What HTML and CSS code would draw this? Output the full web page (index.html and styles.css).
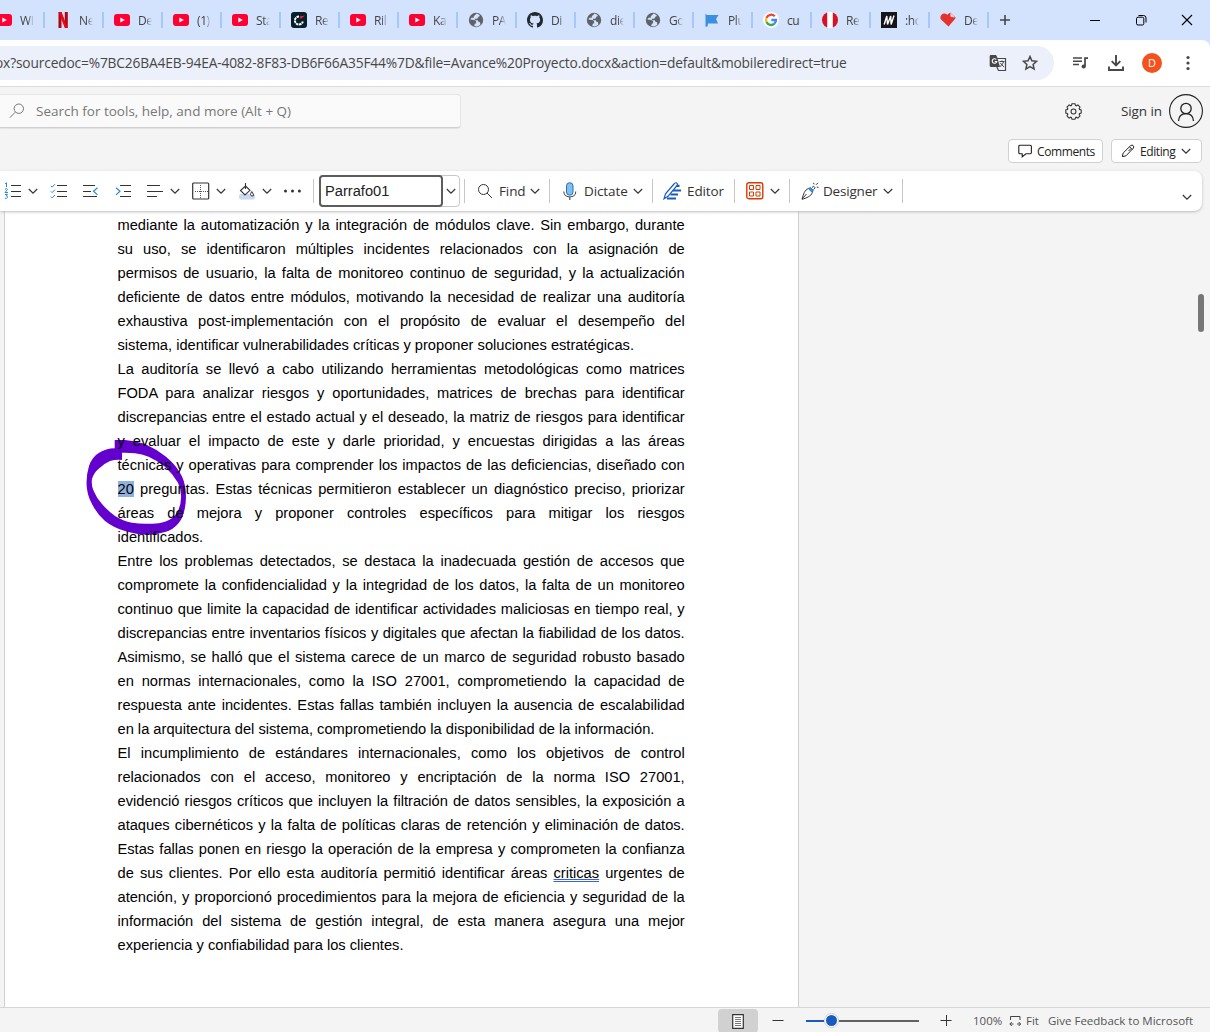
FILE: index.html
```html
<!DOCTYPE html>
<html lang="es">
<head>
<meta charset="utf-8">
<title>Avance Proyecto.docx</title>
<link rel="stylesheet" href="styles.css">
</head>
<body>
<svg class="defs" width="0" height="0">
  <symbol id="yt" viewBox="0 0 16 16"><rect x="0" y="2" width="16" height="12" rx="3" fill="#ff0033"/><path d="M6.3 5.4v5.2L10.8 8z" fill="#fff"/></symbol>
  <symbol id="globe" viewBox="0 0 16 16"><circle cx="8" cy="8" r="7.2" fill="#5f6368"/><path d="M8.7 1.6 5.8 4.2v1.6H3.5l-1.2 1.6 4 .5 1.8 1.3v2.3H6.9l-.7 2.6c3 .8 5-.1 6.200-1.500l-.4-2.300-1.500-.5-.8-1.600H6.900V6.800h2.300l1.500-2.200 1.400-.5C11.300 2.900 10.400 2 8.700 1.600z" fill="#d3e2fd"/></symbol>
  <symbol id="chev" viewBox="0 0 10 10"><path d="M.8 3 5 7.200 9.200 3" fill="none" stroke="#333" stroke-width="1.15"/></symbol>
  <symbol id="tooth" viewBox="-8 -8 16 16"><path d="M5.170-2.140 7.260-1.410V1.410L5.170 2.140" fill="none" stroke="#333"/></symbol>
</svg>

<header class="tabs">
  <div class="tab"><svg><use href="#yt"/></svg><span>WI</span></div>
  <div class="tab"><svg viewBox="0 0 16 16"><path d="M3.500 0h3v16l-3 .2zM9.800 0h3v16l-3-.3z" fill="#b1060f"/><path d="M3.500 0h3.100l6.200 16-3.100-.3z" fill="#e50914"/></svg><span>Ne</span></div>
  <div class="tab"><svg><use href="#yt"/></svg><span>De</span></div>
  <div class="tab"><svg><use href="#yt"/></svg><span>(1)</span></div>
  <div class="tab"><svg><use href="#yt"/></svg><span>Sta</span></div>
  <div class="tab"><svg viewBox="0 0 16 16"><rect width="16" height="16" rx="3" fill="#06202b"/><path d="M8 4.500a4 4 0 1 0 3.800 5" fill="none" stroke="#fff" stroke-width="2" stroke-dasharray="2.500 .6"/><path d="M8.500 4.500 14 3.500 9.800 7z" fill="#ff1744"/></svg><span>Re</span></div>
  <div class="tab"><svg><use href="#yt"/></svg><span>Ril</span></div>
  <div class="tab"><svg><use href="#yt"/></svg><span>Ka</span></div>
  <div class="tab"><svg><use href="#globe"/></svg><span>PA</span></div>
  <div class="tab"><svg viewBox="0 0 16 16"><path fill="#24292f" d="M8 0C3.580 0 0 3.580 0 8c0 3.540 2.290 6.530 5.470 7.590.4.070.55-.17.55-.38 0-.19-.01-.82-.01-1.490-2.010.37-2.530-.49-2.690-.94-.09-.23-.48-.94-.82-1.130-.28-.15-.68-.52-.01-.53.63-.01 1.080.58 1.230.82.72 1.210 1.870.87 2.330.66.07-.52.28-.87.51-1.070-1.780-.2-3.640-.89-3.640-3.950 0-.87.31-1.590.82-2.150-.08-.2-.36-1.020.08-2.120 0 0 .67-.21 2.200.82.64-.18 1.320-.27 2-.27s1.360.09 2 .27c1.530-1.040 2.200-.82 2.200-.82.44 1.100.16 1.920.08 2.120.51.56.82 1.270.82 2.150 0 3.070-1.870 3.750-3.650 3.950.29.25.54.73.54 1.480 0 1.070-.01 1.930-.01 2.200 0 .21.15.46.55.38A8.010 8.010 0 0 0 16 8c0-4.420-3.580-8-8-8z"/></svg><span>Di<!-- --></span></div>
  <div class="tab"><svg><use href="#globe"/></svg><span>die</span></div>
  <div class="tab"><svg><use href="#globe"/></svg><span>Go</span></div>
  <div class="tab"><svg viewBox="0 0 16 16"><path d="M1.500 1.800 3 3h11.500L12 7l2 4.500H4l-.5 3-2 .3z" fill="#3c8ee0"/></svg><span>Plu</span></div>
  <div class="tab"><svg viewBox="0 0 16 16"><circle cx="8" cy="8" r="8" fill="#fff"/><g fill="none" stroke-width="2.300"><path d="M11.800 4.300A5 5 0 0 0 3.500 5.900" stroke="#ea4335"/><path d="M3.500 5.900a5 5 0 0 0 0 4.200" stroke="#fbbc05"/><path d="M3.500 10.100a5 5 0 0 0 7.900 1.600" stroke="#34a853"/><path d="M11.400 11.700A5 5 0 0 0 13 8H8.300" stroke="#4285f4"/></g></svg><span class="plain">cu</span></div>
  <div class="tab"><svg viewBox="0 0 16 16"><circle cx="8" cy="8" r="8" fill="#d91023"/><path d="M5.200 0h5.600v16H5.200z" fill="#fff"/></svg><span>Re</span></div>
  <div class="tab"><svg viewBox="0 0 16 16"><path d="M0 0h16v16H0z" fill="#15141a"/><path d="M3.200 12.500 5.800 4l.7 8.500L9.700 4l.4 8.500L13 3.500" fill="none" stroke="#fff" stroke-width="1.400"/></svg><span>:ho</span></div>
  <div class="tab"><svg viewBox="0 0 16 16"><path d="M8.500 14.500.8 7.200C-1 3.500 3.500-.5 7.200 2.700L9.500 1l6 5.300z" fill="#e5322d"/><path d="m10 .8 5.500 4.700-5-.6z" fill="#fff" stroke="#e5322d" stroke-width=".5"/></svg><span>De</span></div>
  <svg class="plus" viewBox="0 0 12 12"><path d="M6 1v10M1 6h10" stroke="#474747" stroke-width="1.600"/></svg>
  <div class="winbtns">
    <svg viewBox="0 0 12 12"><path d="M1 6.500h10" stroke="#000"/></svg>
    <svg viewBox="0 0 12 12" fill="none" stroke="#000"><rect x="1.500" y="3.200" width="7.300" height="7.800" rx="1.500"/><path d="M3.500 1.500h5A2.500 2.500 0 0 1 11 4v4.500"/></svg>
    <svg viewBox="0 0 12 12"><path d="m1 1 10 10M11 1 1 11" stroke="#000" stroke-width="1.100"/></svg>
  </div>
</header>

<div class="addressbar">
  <div class="omnibox">
    <span class="url">ox?sourcedoc=%7BC26BA4EB-94EA-4082-8F83-DB6F66A35F44%7D&amp;file=Avance%20Proyecto.docx&amp;action=default&amp;mobileredirect=true</span>
    <svg class="translate" viewBox="0 0 18 18"><path d="M8 4.500h8.500v12H9.500L7.500 12" fill="none" stroke="#474747" stroke-width="1.200"/><path d="M1.500 1H7l1 1.800L11 13H1.500L.7 12V1.800z" fill="#474747"/><path d="M7.300 5.500a2.300 2.300 0 1 0 .5 2H5.700" fill="none" stroke="#fff" stroke-width="1.100"/><path d="M10.500 7.500h5M13 6.500v1M14.500 7.500c-.5 2.500-2 4-3.500 5M11.300 9l3.600 4" stroke="#474747" fill="none"/></svg>
    <svg class="star" viewBox="0 0 16 16"><path d="m8 1.500 1.900 4.300 4.700.5-3.500 3.100 1 4.700L8 11.700l-4.100 2.400 1-4.700L1.400 6.300l4.700-.5z" fill="none" stroke="#474747" stroke-width="1.500"/></svg>
  </div>
  <svg class="media" viewBox="0 0 16 14"><path d="M0 2h9M0 5.200h9M0 8.500h6" stroke="#474747" stroke-width="1.600"/><path d="M12 10V2.200h3" stroke="#474747" stroke-width="1.700" fill="none"/><circle cx="10.700" cy="10.500" r="2.100" fill="#474747"/></svg>
  <svg class="download" viewBox="0 0 16 16"><path d="M8 0v10M3.700 6.200 8 10.500l4.300-4.300M1 11.500V15h14v-3.500" fill="none" stroke="#474747" stroke-width="1.900"/></svg>
  <span class="profile">D</span>
  <svg class="kebab" viewBox="0 0 4 16" fill="#474747"><circle cx="2" cy="2.500" r="1.600"/><circle cx="2" cy="8" r="1.600"/><circle cx="2" cy="13.500" r="1.600"/></svg>
</div>

<div class="apphead">
  <div class="search">
    <svg viewBox="0 0 16 16" fill="none" stroke="#777"><circle cx="9.800" cy="5.700" r="4.700"/><path d="M6.300 9.200.8 14.700"/></svg>
    <span class="t-search">Search for tools, help, and more (Alt + Q)</span>
  </div>
  <svg class="gear" viewBox="-8 -8 16 16" fill="none" stroke="#333"><g id="half"><path id="t0" d="M5.170-2.140 7.260-1.410V1.410L5.170 2.140"/><use href="#t0" transform="rotate(45)"/><use href="#t0" transform="rotate(90)"/><use href="#t0" transform="rotate(135)"/></g><use href="#half" transform="rotate(180)"/><circle r="2.300"/></svg>
  <span class="signin">Sign in</span>
  <svg class="person" viewBox="0 0 34 34" fill="none" stroke="#222"><circle cx="17" cy="17" r="16.400" stroke-width="1.100"/><circle cx="17" cy="14.500" r="5.200" stroke-width="1.300"/><path d="M9.500 27c.3-4.700 3.200-7.300 7.500-7.300s7.200 2.600 7.500 7.300" stroke-width="1.300"/></svg>
</div>

<div class="modes">
  <div class="pill comments"><svg viewBox="0 0 14 14"><path d="M2 1.200h10.200q1.200 0 1.200 1.200v6.200q0 1.200-1.200 1.200H8L4.200 12.800V9.800H2Q.8 9.800.8 8.600V2.400Q.8 1.200 2 1.200z" fill="none" stroke="#222" stroke-width="1.100"/></svg><span>Comments</span></div>
  <div class="pill editing"><svg viewBox="0 0 14 14" fill="none" stroke="#222"><path d="m1.300 12.700.9-3.700L9.800 1.500q1.300-1 2.400.2t.2 2.400L5 11.800zM8.500 2.700l2.800 2.800M10 4.500 7.500 7"/></svg><span>Editing</span><svg class="chev"><use href="#chev"/></svg></div>
</div>

<div class="ribbon">
  <div class="cell"><svg class="ic" viewBox="0 0 18 18"><path d="M7 3.500h10M7 9.500h10M7 14.500h10" stroke="#333" stroke-width="1.100"/><path d="M1 1.800 2.500.8V5M1 7.200q2.500-1.200 2.500.3L1 10.500h3M1 12.500h2.500L2.300 14q1.700.2 1.200 1.600-.8 1.400-2.700.5" fill="none" stroke="#2b88d8"/></svg><svg class="chev"><use href="#chev"/></svg></div>
  <div class="cell"><svg class="ic" viewBox="0 0 18 18"><path d="M7 3.500h10M7 9.500h10M7 14.500h10" stroke="#333" stroke-width="1.100"/><path d="m.8 3.800 1.300 1.300L5 2.200M.8 9.300l1.300 1.300L5 7.700M.8 14.600l1.300 1.300L5 13" fill="none" stroke="#2b88d8"/></svg></div>
  <div class="cell"><svg class="ic" viewBox="0 0 18 18"><path d="M1 3.500h12M1 9.500h8M1 14.500h14" stroke="#333" stroke-width="1.100"/><path d="M15.500 5.700 11.500 9.300l4 3.600" fill="none" stroke="#2b88d8" stroke-width="1.200"/></svg></div>
  <div class="cell"><svg class="ic" viewBox="0 0 18 18"><path d="M5 3.500h11M9 9.500h7M5 14.500h11" stroke="#333" stroke-width="1.100"/><path d="M1 5.700 5 9.300l-4 3.600" fill="none" stroke="#2b88d8" stroke-width="1.200"/></svg></div>
  <div class="cell"><svg class="ic" viewBox="0 0 18 18"><path d="M1 3.500h13M1 9.500h16M1 14.500h10" stroke="#333" stroke-width="1.100"/></svg><svg class="chev"><use href="#chev"/></svg></div>
  <div class="cell"><svg class="ic" viewBox="0 0 18 18"><rect x=".7" y="1" width="16" height="16" rx="1" fill="none" stroke="#333" stroke-width="1.200"/><path d="M8.500 3v13M3 9.500h13" stroke="#555" stroke-dasharray="1 1"/></svg><svg class="chev"><use href="#chev"/></svg></div>
  <div class="cell"><svg class="ic" viewBox="0 0 18 18"><rect x="1" y="12" width="16" height="5.500" rx="2" fill="#ccdaf1"/><path d="m7.500 4 4.500 4.300-5 4.700-4.500-4.500L7.500 4M7.500 1v6" fill="#fff" stroke="#333" stroke-width="1.100"/><path d="M13.800 9.500q-2.500 4 0 4.500t1.500-2z" fill="#fff" stroke="#333"/></svg><svg class="chev"><use href="#chev"/></svg></div>
  <div class="cell"><svg class="ic" viewBox="0 0 18 18" fill="#333"><circle cx="2.500" cy="9" r="1.500"/><circle cx="9.500" cy="9" r="1.500"/><circle cx="16.400" cy="9" r="1.500"/></svg></div>
  <i class="sep"></i>
  <div class="combo"><span>Parrafo01</span><b><svg class="chev"><use href="#chev"/></svg></b></div>
  <i class="sep"></i>
  <div class="cell"><svg class="ic" viewBox="0 0 18 18" fill="none" stroke="#333"><circle cx="6.500" cy="7.500" r="5"/><path d="m10 11 5 5"/></svg><span class="t-find">Find</span><svg class="chev"><use href="#chev"/></svg></div>
  <i class="sep"></i>
  <div class="cell"><svg class="ic" viewBox="0 0 18 18"><rect x="4.500" y=".7" width="6.500" height="12.500" rx="3.200" fill="#83beec" stroke="#1c75bc"/><path d="M1.800 9.500c0 7.300 12 7.300 12 0M7.800 15v3" fill="none" stroke="#444" stroke-width="1.100"/></svg><span class="t-dict">Dictate</span><svg class="chev"><use href="#chev"/></svg></div>
  <i class="sep"></i>
  <div class="cell"><svg class="ic" viewBox="0 0 18 18"><path d="M12 3.800h4.500M10 8.500h8.500M7.500 12.500H15M4 16.500h9" stroke="#185abd" stroke-width="2.200"/><path d="m1 16.800 1.500-5L11 2q2-2.200 3.200-.5.700 1.200-1 3L5 14.300z" fill="#fff" stroke="#185abd" stroke-width="1.200"/></svg><span class="t-edit">Editor</span></div>
  <i class="sep"></i>
  <div class="cell"><svg class="ic" viewBox="0 0 18 18" fill="none" stroke="#d83b01"><rect x=".8" y=".700" width="16" height="16" rx="2" stroke-width="1.400"/><path d="M3.500 3.500h4v4h-4zM10 3.500h4v4h-4zM3.500 10h4v4h-4zM10 10h4v4h-4z"/></svg><svg class="chev"><use href="#chev"/></svg></div>
  <i class="sep"></i>
  <div class="cell"><svg class="ic" viewBox="0 0 18 18" fill="none" stroke="#333"><path d="M7.500 6.500C3.500 8 2.500 12 1 17.300c5-1.500 9-3 10.300-6.800M1 17l4.500-5M11 5.500l1.500-1.300 1.600 1.600-1.600 1.700M12.500.8l.5 1.500M17 .8l-2 2M15.800 5l1.700.4"/><path d="M7.300 6.500 9.500 5.500l2.700 2.800-.9 2.200z" fill="#3a96dd" stroke="#1c75bc"/></svg><span class="t-design">Designer</span><svg class="chev"><use href="#chev"/></svg></div>
  <i class="sep"></i>
  <div class="cell collapse"><svg class="chev"><use href="#chev"/></svg></div>
</div>

<main class="workspace">
  <div class="page">
    <svg class="ink" viewBox="86 439 102 98"><path d="M114.700 440H125Q136 441 145 444Q156 449 165 456Q175 464 180 472.700Q185 481 185.700 491Q186.500 501 184.700 509Q183 518 178.700 523Q173 530 165 532Q157 534.700 148.700 534.700Q136 534.500 125 531Q114 528 105 521Q97 514 92 504Q86.500 494 86.500 482.700Q86.500 474 89 466Q92 457 98.700 453Q106 448.500 114.700 448.300ZM122 452.700V460Q116 459.300 110 461Q104 463.500 98.700 468.700Q93.500 473 92 479Q91 485 93.700 491Q96.500 498 102 504Q108 511 115 516Q123 521 132 522.700Q140 524 148.700 523.700Q158 524.300 165 521.700Q173 519 177 512.700Q181 506 181 497.700Q181.500 490 178 482.700Q173 474 165 466.700Q158 461 148.700 456.700Q142 454 135 453.300Q129 452.500 122 452.700Z" fill="#6400cd" fill-rule="evenodd"/></svg>
    <p>
      <span>mediante la automatización y la integración de módulos clave. Sin embargo, durante</span>
      <span>su uso, se identificaron múltiples incidentes relacionados con la asignación de</span>
      <span>permisos de usuario, la falta de monitoreo continuo de seguridad, y la actualización</span>
      <span>deficiente de datos entre módulos, motivando la necesidad de realizar una auditoría</span>
      <span>exhaustiva post-implementación con el propósito de evaluar el desempeño del</span>
      <span>sistema, identificar vulnerabilidades críticas y proponer soluciones estratégicas.</span>
    </p>
    <p>
      <span>La auditoría se llevó a cabo utilizando herramientas metodológicas como matrices</span>
      <span>FODA para analizar riesgos y oportunidades, matrices de brechas para identificar</span>
      <span>discrepancias entre el estado actual y el deseado, la matriz de riesgos para identificar</span>
      <span>y evaluar el impacto de este y darle prioridad, y encuestas dirigidas a las áreas</span>
      <span>técnicas y operativas para comprender los impactos de las deficiencias, diseñado con</span>
      <span><mark>20</mark> preguntas. Estas técnicas permitieron establecer un diagnóstico preciso, priorizar</span>
      <span>áreas de mejora y proponer controles específicos para mitigar los riesgos</span>
      <span>identificados.</span>
    </p>
    <p>
      <span>Entre los problemas detectados, se destaca la inadecuada gestión de accesos que</span>
      <span>compromete la confidencialidad y la integridad de los datos, la falta de un monitoreo</span>
      <span>continuo que limite la capacidad de identificar actividades maliciosas en tiempo real, y</span>
      <span>discrepancias entre inventarios físicos y digitales que afectan la fiabilidad de los datos.</span>
      <span>Asimismo, se halló que el sistema carece de un marco de seguridad robusto basado</span>
      <span>en normas internacionales, como la ISO 27001, comprometiendo la capacidad de</span>
      <span>respuesta ante incidentes. Estas fallas también incluyen la ausencia de escalabilidad</span>
      <span>en la arquitectura del sistema, comprometiendo la disponibilidad de la información.</span>
    </p>
    <p>
      <span>El incumplimiento de estándares internacionales, como los objetivos de control</span>
      <span>relacionados con el acceso, monitoreo y encriptación de la norma ISO 27001,</span>
      <span>evidenció riesgos críticos que incluyen la filtración de datos sensibles, la exposición a</span>
      <span>ataques cibernéticos y la falta de políticas claras de retención y eliminación de datos.</span>
      <span>Estas fallas ponen en riesgo la operación de la empresa y comprometen la confianza</span>
      <span>de sus clientes. Por ello esta auditoría permitió identificar áreas <u>criticas</u> urgentes de</span>
      <span>atención, y proporcionó procedimientos para la mejora de eficiencia y seguridad de la</span>
      <span>información del sistema de gestión integral, de esta manera asegura una mejor</span>
      <span>experiencia y confiabilidad para los clientes.</span>
    </p>
  </div>
  <div class="scroll"></div>
</main>

<footer class="status">
  <div class="view"><svg viewBox="0 0 12 15"><path d="M.7.700h10.600v13.600H.7z" fill="#fff" stroke="#333" stroke-width="1.200"/><path d="M3 3.500h6M3 5.500h6M3 7.500h6M3 9.500h6M3 11.500h6" stroke="#777"/></svg></div>
  <svg class="minus" viewBox="0 0 12 12"><path d="M.5 5.500h11" stroke="#333"/></svg>
  <div class="slider"><i></i></div>
  <svg class="add" viewBox="0 0 12 12"><path d="M.5 5.500h11M6.500 0v11" stroke="#333"/></svg>
  <span class="pct">100%</span>
  <svg class="fiticon" viewBox="0 0 12 12" fill="none" stroke="#444"><path d="M1.500 5V1.500h9.500V5M1 9h3.500M11.500 9H8M2.800 7 .8 9l2 2M9.700 7l2 2-2 2"/></svg>
  <span class="fit">Fit</span>
  <span class="feedback">Give Feedback to Microsoft</span>
</footer>
</body>
</html>
```

FILE: styles.css
```css
* { box-sizing: border-box; }
body { margin: 0; width: 1210px; height: 1032px; overflow: hidden; display: flex; flex-direction: column; background: #f4f4f4; color: #333; font: 13.500px/20px "Open Sans", "Noto Sans", sans-serif; }
svg { display: block; flex: none; }
span { white-space: nowrap; }
.defs { position: absolute; }

.tabs { height: 40px; flex: none; background: #d3e2fd; display: flex; align-items: center; }
.tab { width: 59px; height: 16px; flex: none; display: flex; align-items: center; gap: 8px; padding-left: 10px; border-right: 2px solid #a8c7fa; }
.tab:first-child { margin-left: -14px; }
.tab svg { width: 16px; height: 16px; }
.tab span { width: 14px; padding-top: 1px; overflow: hidden; font-size: 12px; letter-spacing: -.4px; color: #444; -webkit-mask-image: linear-gradient(90deg, #000 55%, transparent 100%); mask-image: linear-gradient(90deg, #000 55%, transparent 100%); }
.tab .plain { -webkit-mask-image: none; mask-image: none; }
.plus { width: 12px; height: 12px; margin-left: 10px; }
.winbtns { display: flex; gap: 34px; margin-left: auto; padding-right: 17px; }
.winbtns svg { width: 12px; height: 12px; }

.addressbar { height: 47px; flex: none; display: flex; align-items: center; background: #fff; border-bottom: 1px solid #dcdcdc; border-top-right-radius: 8px; box-shadow: 8px -8px 0 #d3e2fd; padding-right: 20px; }
.omnibox { width: 1054px; height: 34px; border-radius: 0 17px 17px 0; background: #ebf0fa; display: flex; align-items: center; }
.url { width: 989px; margin-left: -5px; overflow: hidden; font-size: 13.750px; color: #474747; letter-spacing: -.155px; }
.translate { width: 18px; height: 18px; margin-left: 5px; }
.star { width: 16px; height: 16px; margin-left: 15px; }
.media { width: 16px; height: 14px; margin-left: 19px; }
.download { width: 16px; height: 16px; margin-left: 19px; }
.profile { width: 20px; height: 20px; margin-left: 18px; border-radius: 50%; background: #f4511e; color: #fff; font-size: 11px; text-align: center; }
.kebab { width: 4px; height: 16px; margin-left: 24px; }

.apphead { height: 48px; flex: none; display: flex; align-items: center; }
.search { width: 461px; height: 34px; display: flex; align-items: center; gap: 11px; padding-left: 9px; background: #fafafa; border: 1px solid #e6e6e6; border-bottom-color: #d0d0d0; border-left: 0; border-radius: 0 4px 4px 0; box-shadow: 0 1px 1px #e4e4e4; color: #777; }
.search svg { width: 16px; height: 16px; }
.gear { width: 17px; height: 17px; margin-left: 604px; }
.signin { width: 48px; margin-left: 39px; letter-spacing: -.1px; }
.person { width: 34px; height: 34px; }

.modes { height: 36px; flex: none; display: flex; justify-content: flex-end; gap: 8px; padding: 4px 8px 0 0; }
.pill { height: 24px; background: #fff; border: 1px solid #d1d1d1; border-radius: 4px; display: flex; align-items: center; font-size: 12px; letter-spacing: -.4px; color: #222; }
.pill span { padding-top: 1px; }
.pill svg { width: 14px; height: 14px; }
.comments { width: 95px; padding-left: 9px; gap: 5px; }
.editing { width: 91px; padding-left: 9px; gap: 5px; }
.pill .chev { margin-left: 1px; }
.chev, .pill .chev { width: 10px; height: 10px; }

.ribbon { position: relative; z-index: 2; width: 1202px; height: 40px; flex: none; display: grid; grid-template-columns: 46px 32px 33px 31px 46px 46px 45px 30px 5px 146px 13px 72px 13px 90px 11px 71px 12px 43px 12px 101px 280px 12px; align-items: center; padding-left: 4px; background: #fff; border-radius: 0 8px 8px 0; box-shadow: 0 1px 3px #bbb; letter-spacing: -.1px; }
.cell { display: flex; align-items: center; }
.ic { width: 18px; height: 18px; }
.cell .ic + .chev { margin-left: 6px; }
.cell span { margin-left: 4px; }
.t-find { width: 27px; }
.t-dict { width: 45px; }
.t-design { width: 56px; letter-spacing: -.2px; }
.cell .t-edit { margin-left: 6px; }
.cell span + .chev { margin-left: 4px; }
.sep { width: 1px; height: 24px; background: #c6c6c6; }
.combo { width: 141px; height: 32px; margin-left: 1px; display: flex; border: 1px solid #c8c8c8; border-radius: 4px; letter-spacing: 0; }
.combo span { width: 124px; margin: -1px; border: 2px solid #5c5c5c; border-radius: 4px; font: 14.670px/28px "Liberation Sans", Arial, sans-serif; color: #222; padding-left: 4px; height: 32px; }
.combo b { flex: 1; display: flex; align-items: center; justify-content: center; }
.collapse { padding-top: 12px; }

.workspace { flex: 1; min-height: 0; display: flex; justify-content: space-between; overflow: hidden; }
.page { position: relative; z-index: 0; width: 795px; margin-left: 4px; padding: 2px 113px 0 112.500px; background: #fff; border: solid #d0d0d0; border-width: 0 1px; }
.page p { margin: 0; font: 14.670px/24px "Liberation Sans", Arial, sans-serif; color: #000; }
.page p span { display: block; text-align: justify; text-align-last: justify; white-space: normal; width: 567.200px; }
.page p span:last-child { text-align-last: left; }
.page mark { background: #8fb1dc; color: #000; }
.page u { text-decoration: underline double #3a5fe0; text-decoration-thickness: 1px; text-underline-offset: 1px; }
.ink { position: absolute; z-index: -1; left: 81px; top: 228px; width: 102px; height: 98px; }
.scroll { width: 6px; height: 38px; margin: 83px 6px 0 0; border-radius: 3px; background: #777; }

.status { height: 25px; flex: none; display: flex; align-items: center; border-top: 1px solid #d6d6d6; padding: 2px 0 0 718px; font-size: 11.500px; color: #555; }
.view { width: 40px; height: 24px; background: #d1d1d1; border-radius: 4px; display: grid; place-items: center; }
.view svg { width: 12px; height: 15px; }
.minus { width: 12px; height: 12px; margin-left: 14px; }
.slider { width: 113px; height: 2px; margin: -1px 0 0 22px; background: linear-gradient(90deg, #185abd 18px, #616161 18px); }
.slider i { display: block; width: 15px; height: 15px; margin: -7px 0 0 18px; border: 2px solid #fff; outline: 1px solid #ccc; outline-offset: -1px; border-radius: 50%; background: #185abd; }
.add { width: 12px; height: 12px; margin-left: 21px; }
.pct { width: 29px; margin-left: 21px; }
.fiticon { width: 12px; height: 12px; margin-left: 7px; }
.fit { width: 13px; margin-left: 5px; }
.feedback { margin-left: 9px; }
```
